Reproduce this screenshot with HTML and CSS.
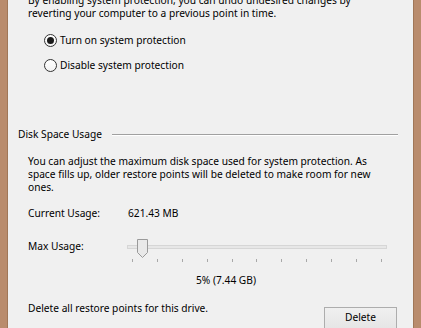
FILE: index.html
```html
<!DOCTYPE html>
<html lang="en">
<head>
<meta charset="utf-8">
<title>System Protection</title>
<link rel="stylesheet" href="styles.css">
</head>
<body>
<div class="window">
  <div class="frame frame-left"></div>
  <div class="client">
    <p class="intro">By enabling system protection, you can undo undesired changes by<br>reverting your computer to a previous point in time.</p>
    <div class="radios">
      <label class="radio"><span class="dot checked"></span>Turn on system protection</label>
      <label class="radio"><span class="dot"></span>Disable system protection</label>
    </div>
    <div class="group-head"><span class="group-title">Disk Space Usage</span><span class="rule"></span></div>
    <p class="desc">You can adjust the maximum disk space used for system protection. As<br>space fills up, older restore points will be deleted to make room for new<br>ones.</p>
    <div class="row usage-row"><span class="lbl">Current Usage:</span><span>621.43 MB</span></div>
    <div class="row slider-row">
      <span class="lbl slider-lbl">Max Usage:</span>
      <div class="slider">
        <div class="track"></div>
        <svg class="thumb" width="11" height="19" viewBox="0 0 11 19"><path d="M0.5 0.5H10.5V13.5L5.5 18.5L0.5 13.5Z" fill="#e9e9e9" stroke="#9a9a9a"/></svg>
        <div class="ticks"><i></i><i></i><i></i><i></i><i></i><i></i><i></i><i></i><i></i><i></i><i></i></div>
      </div>
    </div>
    <div class="pct">5% (7.44 GB)</div>
    <div class="row delete-row"><span>Delete all restore points for this drive.</span><button class="btn">Delete</button></div>
  </div>
  <div class="frame frame-right"></div>
</div>
</body>
</html>
```
FILE: styles.css
```css
html, body { margin: 0; padding: 0; }
body { width: 421px; height: 328px; overflow: hidden; background: #f0f0f0; }
.window { display: flex; width: 421px; height: 328px; overflow: hidden; font-family: "Noto Sans", "Open Sans", sans-serif; font-size: 10.2px; line-height: 13px; color: #000; }
.frame { background: #b98c6d; flex: none; }
.frame-left { width: 7px; border-right: 1px solid #a07758; }
.frame-right { width: 7px; border-left: 1px solid #a07758; }
.client { flex: 1; background: #f0f0f0; padding: 0 15px 0 20px; display: flex; flex-direction: column; min-width: 0; }
.intro { margin: -6px 0 0 0; white-space: nowrap; }
.radios { margin: 13px 0 0 16px; display: flex; flex-direction: column; gap: 10px; }
.radio { display: flex; align-items: center; height: 15px; gap: 3px; }
.dot { width: 11px; height: 11px; border: 1px solid #333; border-radius: 50%; background: linear-gradient(#ffffff, #f3f3f3); display: flex; align-items: center; justify-content: center; flex: none; }
.dot.checked::after { content: ""; width: 7px; height: 7px; border-radius: 50%; background: #1a1a1a; }
.group-head { margin: 55px 0 0 -10px; display: flex; align-items: center; height: 13px; gap: 10px; }
.group-title { white-space: nowrap; }
.rule { flex: 1; height: 0; border-top: 1px solid #a0a0a0; border-bottom: 1px solid #ffffff; }
.desc { margin: 14px 0 0 0; white-space: nowrap; }
.row { display: flex; }
.lbl { width: 100px; flex: none; }
.usage-row { margin-top: 13px; }
.slider-row { margin-top: 19px; align-items: flex-start; }
.slider-lbl { width: 99px; margin-top: 1px; }
.slider { position: relative; width: 260px; height: 24px; }
.track { margin-top: 6px; height: 2px; background: #e7e7e7; border: 1px solid #d6d6d6; }
.thumb { position: absolute; left: 10px; top: 0; }
.ticks { display: flex; justify-content: space-between; margin: 10px 5px 0 5px; }
.ticks i { width: 1px; height: 3px; background: #a8a8a8; }
.pct { margin: 11px 0 0 168px; }
.delete-row { margin-top: 15px; justify-content: space-between; align-items: flex-start; }
.btn { margin: 5px 1px 0 0; width: 73px; height: 23px; padding: 0 0 2px 0; border: 1px solid #adadad; background: linear-gradient(#f0f0f0, #e5e5e5); font: inherit; color: #000; line-height: 19px; }
```
